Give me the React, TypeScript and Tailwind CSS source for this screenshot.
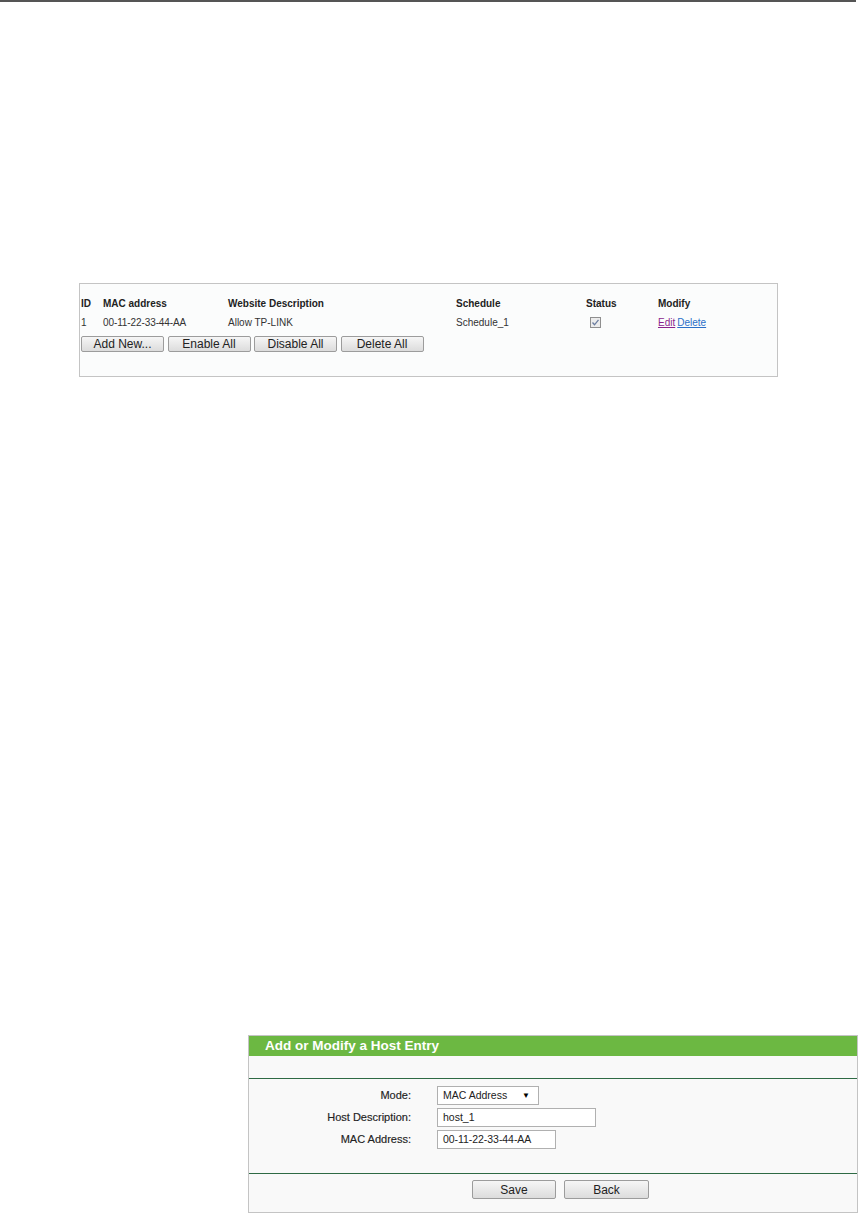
import React from "react";

const btn =
  "border border-[#9c9c9c] rounded-[2px] bg-gradient-to-b from-[#f6f6f6] to-[#dcdcdc] text-[12px] leading-none text-[#222] flex items-center justify-center";

function Panel1() {
  return (
    <div className="mt-[281px] ml-[79px] w-[699px] h-[94px] border border-[#c4c4c4] bg-[#fbfcfc] text-[10px] text-[#222]">
      <div className="mt-[12px] h-[14px] flex items-center font-bold pl-[1px]">
        <div className="w-[22px]">ID</div>
        <div className="w-[125px]">MAC address</div>
        <div className="w-[228px]">Website Description</div>
        <div className="w-[130px]">Schedule</div>
        <div className="w-[72px]">Status</div>
        <div>Modify</div>
      </div>
      <div className="mt-[5px] h-[14px] flex items-center pl-[1px] text-[#333]">
        <div className="w-[22px]">1</div>
        <div className="w-[125px] tracking-[-0.1px]">00-11-22-33-44-AA</div>
        <div className="w-[228px]">Allow TP-LINK</div>
        <div className="w-[130px]">Schedule_1</div>
        <div className="w-[72px] pl-[4px] flex items-center">
          <svg width="11" height="11" viewBox="0 0 11 11">
            <rect x="0.5" y="0.5" width="10" height="10" fill="#ececec" stroke="#8f8f8f" />
            <path d="M2.5 5.5 L4.5 7.8 L8.5 2.8" fill="none" stroke="#6b7da0" strokeWidth="1.3" />
          </svg>
        </div>
        <div className="flex gap-[2px]">
          <span className="text-[#8b1f8c] underline">Edit</span>
          <span className="text-[#2b6fc8] underline">Delete</span>
        </div>
      </div>
      <div className="mt-[7px] h-[16px] flex gap-[3.5px] pl-[1px]">
        <div className={`${btn} w-[83px] h-[16px]`}>Add New...</div>
        <div className={`${btn} w-[83px] h-[16px]`}>Enable All</div>
        <div className={`${btn} w-[83px] h-[16px]`}>Disable All</div>
        <div className={`${btn} w-[83px] h-[16px]`}>Delete All</div>
      </div>
    </div>
  );
}

function Panel2() {
  const label =
    "w-[162px] text-right text-[11px] text-[#222] [-webkit-text-stroke:0.15px_#222]";
  const input =
    "h-[19px] border border-[#b0b0b0] bg-white text-[10.5px] text-[#222] flex items-center pl-[5px]";
  return (
    <div className="mt-[658px] ml-[248px] w-[610px] h-[178px] border border-[#c4c4c4] bg-[#f9f9f9] flex flex-col">
      <div className="h-[20px] bg-[#6cb842] text-white font-bold text-[13.5px] flex items-center pl-[16px] shrink-0">
        Add or Modify a Host Entry
      </div>
      <div className="h-[22px] shrink-0" />
      <div className="h-[1px] bg-[#2e6a44] shrink-0" />
      <div className="h-[94px] pt-[7px] flex flex-col gap-[3px] shrink-0">
        <div className="flex items-center gap-[26px]">
          <div className={label}>Mode:</div>
          <div className={`${input} w-[102px] justify-between pr-[8px]`}>
            <span>MAC Address</span>
            <span className="text-[8px] text-black">▼</span>
          </div>
        </div>
        <div className="flex items-center gap-[26px]">
          <div className={label}>Host Description:</div>
          <div className={`${input} w-[159px]`}>host_1</div>
        </div>
        <div className="flex items-center gap-[26px]">
          <div className={label}>MAC Address:</div>
          <div className={`${input} w-[119px] tracking-[-0.05px]`}>00-11-22-33-44-AA</div>
        </div>
      </div>
      <div className="h-[1px] bg-[#2e6a44] shrink-0" />
      <div className="pt-[6px] flex gap-[8px] pl-[223px]">
        <div className={`${btn} w-[84px] h-[19px]`}>Save</div>
        <div className={`${btn} w-[85px] h-[19px]`}>Back</div>
      </div>
    </div>
  );
}

export default function App() {
  return (
    <div className="w-[858px] h-[1213px] bg-white overflow-hidden flex flex-col font-['Liberation_Sans',Arial,sans-serif]">
      <div className="h-[2px] w-[856px] bg-[#555] shrink-0" />
      <Panel1 />
      <Panel2 />
    </div>
  );
}
